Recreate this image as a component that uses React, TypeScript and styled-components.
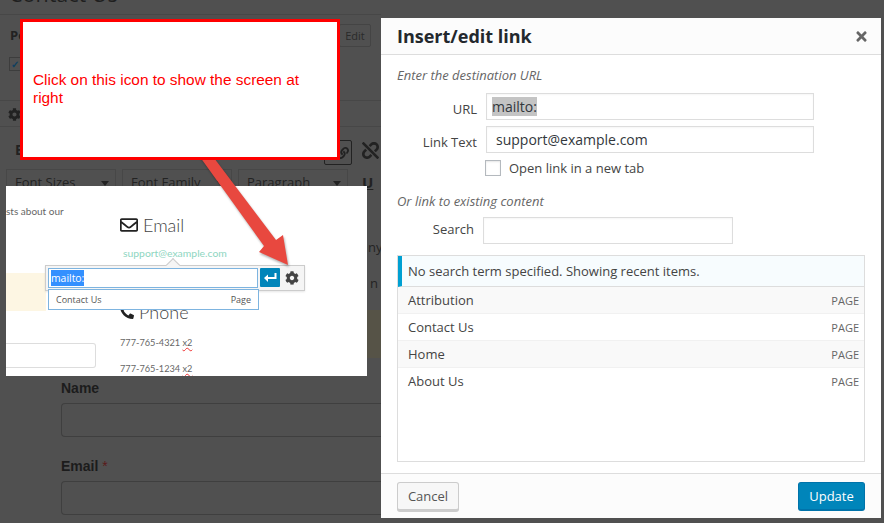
import styled, { createGlobalStyle } from "styled-components";
import { FaCog, FaLink, FaPhone, FaRegEnvelope, FaTimes, FaUnlink } from "react-icons/fa";

const GlobalStyle = createGlobalStyle`
  html, body {
    margin: 0;
    padding: 0;
    background: #505050;
  }
  * {
    box-sizing: border-box;
  }
`;

const Page = styled.div`
  position: relative;
  width: 884px;
  height: 523px;
  overflow: hidden;
  background: #505050;
  font-family: "Open Sans", "Liberation Sans", sans-serif;
  color: #222;
`;

/* dimmed wordpress editor behind the dialog */
const Backdrop = styled.div`
  display: flex;
  flex-direction: column;
  width: 381px;
`;

const TitleBar = styled.div`
  height: 15px;
  overflow: hidden;
  padding-left: 9px;
  border-bottom: 1px solid #474747;
  display: flex;
  align-items: flex-end;
`;

const PageTitle = styled.h1`
  margin: 0 0 5px;
  font-size: 21.5px;
  line-height: 30px;
  font-weight: 400;
  color: #1f1f1f;
  white-space: nowrap;
`;

const PublishRow = styled.div`
  height: 42px;
  padding: 9px 9px 0 10px;
  display: flex;
  justify-content: space-between;
  align-items: flex-start;
`;

const MetaLabel = styled.b`
  font-size: 13px;
  line-height: 22px;
`;

const GhostButton = styled.div`
  width: 32px;
  height: 23px;
  margin-right: 1px;
  border: 1px solid #444;
  border-radius: 2px;
  font-size: 11px;
  line-height: 21px;
  text-align: center;
  color: #2a2a2a;
`;

const CheckRow = styled.div`
  height: 43px;
  padding-left: 9px;
`;

const DimCheck = styled.div`
  width: 12px;
  height: 14px;
  border: 1px solid #3d3d3d;
  color: #0f3f5f;
  font-size: 10px;
  font-weight: 700;
  line-height: 12px;
  text-align: center;
`;

const MediaRow = styled.div`
  height: 27px;
  padding: 6px 0 0 8px;
  border-top: 1px solid #474747;
  border-bottom: 1px solid #474747;
  color: #222;
  font-size: 13px;
`;

const ToolRow = styled.div`
  height: 42px;
  padding: 13px 0 0 15px;
  display: flex;
  align-items: flex-start;
  font-size: 14px;
  font-weight: 700;
`;

const ToolSpacer = styled.div`
  flex: 1;
`;

const ToolBox = styled.div`
  width: 28px;
  height: 25px;
  border: 1px solid #222;
  border-radius: 2px;
  display: flex;
  align-items: center;
  justify-content: flex-end;
  padding-right: 2px;
  font-size: 12px;
`;

const ToolIcon = styled.div`
  width: 29px;
  padding: 1px 0 0 10px;
  font-size: 17px;
  color: #222;
`;

const SelectRow = styled.div`
  height: 30px;
  padding-left: 6px;
  display: flex;
  gap: 6px;
`;

const DimSelect = styled.div`
  width: 110px;
  height: 30px;
  padding: 3px 6px 0 8px;
  border: 1px solid #474747;
  display: flex;
  justify-content: space-between;
  font-size: 13px;
  color: #232323;
`;

const Caret = styled.span`
  margin-top: 8px;
  border-left: 4px solid transparent;
  border-right: 4px solid transparent;
  border-top: 5px solid #222;
  height: 0;
`;

const Underline = styled.span`
  margin: 3px 0 0 8px;
  font-size: 15px;
  font-weight: 700;
  text-decoration: underline;
`;

/* what shows of the page content between the inset and the dialog */
const ContentPeek = styled.div`
  height: 181px;
  padding-top: 39px;
  display: flex;
  flex-direction: column;
  align-items: flex-end;
  font-size: 13px;
  line-height: 18px;
  color: #232323;
`;

const PeekLine = styled.div<{ $gap: number; $width: number }>`
  margin-top: ${(p) => p.$gap}px;
  width: ${(p) => p.$width}px;
  white-space: nowrap;
`;

const PeekBand = styled.div`
  margin-top: 18px;
  width: 14px;
  height: 48px;
  background: #565347;
`;

const FormArea = styled.div`
  padding-left: 61px;
  display: flex;
  flex-direction: column;
  font-family: "Liberation Sans", sans-serif;
`;

const FieldLabel = styled.div<{ $gap: number }>`
  margin-top: ${(p) => p.$gap}px;
  font-size: 14px;
  line-height: 16px;
  font-weight: 700;
  color: #1c1c1c;
`;

const Required = styled.span`
  color: #5a1a1a;
  font-weight: 400;
`;

const DimInput = styled.div`
  height: 34px;
  margin-top: 7px;
  border: 1px solid #3f3f3f;
  border-right: 0;
  border-radius: 4px 0 0 4px;
`;

/* red annotation box */
const Callout = styled.div`
  position: absolute;
  left: 20px;
  top: 19px;
  width: 320px;
  height: 141px;
  z-index: 3;
  padding: 0 10px 2px;
  display: flex;
  align-items: center;
  background: #fff;
  border: 3px solid #f00;
  color: #f00;
  font: 15.4px/18px "Liberation Sans", sans-serif;
`;

const ArrowSvg = styled.svg`
  position: absolute;
  left: 190px;
  top: 150px;
  z-index: 2;
  filter: drop-shadow(1px 2px 1px rgba(0, 0, 0, 0.3));
`;

/* pasted screenshot of the page with the link popup */
const Inset = styled.div`
  position: absolute;
  left: 6px;
  top: 186px;
  width: 361px;
  height: 190px;
  z-index: 1;
  overflow: hidden;
  background: #fff;
  display: flex;
  font-family: Lato, "Open Sans", sans-serif;
  color: #555;
`;

const InsetLeft = styled.div`
  width: 114px;
  display: flex;
  flex-direction: column;
`;

const Blurb = styled.div`
  margin-top: 18px;
  font-size: 10px;
  line-height: 14px;
  white-space: nowrap;
  color: #666;
`;

const WarnStrip = styled.div`
  width: 40px;
  height: 38px;
  margin-top: 55px;
  background: #fdf6e3;
`;

const InsetInput = styled.div`
  width: 90px;
  height: 25px;
  margin-top: 32px;
  border: 1px solid #ddd;
  border-left: 0;
  border-radius: 0 3px 3px 0;
`;

const InsetRight = styled.div`
  display: flex;
  flex-direction: column;
`;

const ContactHead = styled.div<{ $gap: number }>`
  margin-top: ${(p) => p.$gap}px;
  height: 24px;
  display: flex;
  align-items: center;
  gap: 5px;
  font-size: 18px;
  font-weight: 300;
  color: #444;
  svg {
    color: #222;
  }
`;

const ContactMail = styled.div`
  margin: 9px 0 0 3px;
  font-size: 10.4px;
  line-height: 14px;
  color: #8ed6bf;
`;

const Phone = styled.div<{ $gap: number }>`
  margin-top: ${(p) => p.$gap}px;
  font-size: 9.2px;
  line-height: 14px;
  color: #666;
`;

const Squiggle = styled.span`
  text-decoration: underline wavy #e33;
  text-decoration-thickness: 1px;
`;

const LinkPopup = styled.div`
  position: absolute;
  left: 39px;
  top: 79px;
  width: 260px;
  height: 26px;
  padding: 2px;
  display: flex;
  gap: 2px;
  background: #f5f5f5;
  border: 1px solid #ccc;
  box-shadow: 0 1px 2px rgba(0, 0, 0, 0.1);
`;

const PopupNib = styled.div`
  position: absolute;
  left: 122px;
  top: -6px;
  width: 10px;
  height: 10px;
  background: #f5f5f5;
  border-top: 1px solid #ccc;
  border-left: 1px solid #ccc;
  transform: rotate(45deg);
`;

const PopupField = styled.div`
  position: relative;
  width: 211px;
  height: 20px;
  padding: 1px 2px;
  background: #fff;
  border: 1px solid #7db4e0;
  font: 10.4px/16px "Open Sans", sans-serif;
`;

const PopupSelected = styled.span`
  display: inline-block;
  background: #3390ff;
  color: #fff;
`;

const EnterButton = styled.div`
  width: 20px;
  height: 19px;
  display: flex;
  align-items: center;
  justify-content: center;
  background: #0085ba;
  border-radius: 1px;
`;

const GearSlot = styled.div`
  width: 20px;
  height: 20px;
  display: flex;
  align-items: center;
  justify-content: center;
  color: #444;
  font-size: 14px;
`;

const SuggestList = styled.div`
  position: absolute;
  left: 42px;
  top: 103px;
  width: 211px;
  height: 21px;
  padding: 0 7px;
  display: flex;
  align-items: center;
  justify-content: space-between;
  background: #fff;
  border: 1px solid #7db4e0;
  font: 9px/12px "Open Sans", sans-serif;
  color: #555;
`;

/* insert/edit link dialog */
const Modal = styled.div`
  position: absolute;
  left: 381px;
  top: 18px;
  width: 500px;
  height: 500px;
  z-index: 4;
  display: flex;
  flex-direction: column;
  background: #fff;
  font-size: 13px;
  color: #555;
`;

const ModalHeader = styled.header`
  height: 37px;
  padding: 0 12px 0 16px;
  display: flex;
  align-items: center;
  justify-content: space-between;
  background: #fcfcfc;
  border-bottom: 1px solid #ddd;
`;

const ModalTitle = styled.h2`
  margin: 0;
  font-size: 18px;
  line-height: 36px;
  font-weight: 700;
  color: #23282d;
`;

const CloseIcon = styled.span`
  display: flex;
  color: #666;
  font-size: 15px;
`;

const ModalBody = styled.div`
  flex: 1;
  padding: 11px 16px 0;
  display: flex;
  flex-direction: column;
`;

const Hint = styled.div<{ $gap?: number }>`
  margin-top: ${(p) => p.$gap ?? 0}px;
  font-style: italic;
  font-size: 13px;
  line-height: 18px;
  color: #666;
`;

const FieldRow = styled.div<{ $gap: number; $labelWidth: number }>`
  margin-top: ${(p) => p.$gap}px;
  display: grid;
  grid-template-columns: ${(p) => p.$labelWidth}px auto;
  align-items: center;
`;

const RowLabel = styled.label<{ $top: number; $bottom: number }>`
  padding: ${(p) => p.$top}px 9px ${(p) => p.$bottom}px 0;
  text-align: right;
  line-height: 18px;
  color: #444;
`;

const TextBox = styled.div<{ $width: number }>`
  width: ${(p) => p.$width}px;
  height: 27px;
  padding: 3px 3px 0;
  border: 1px solid #ddd;
  font-size: 14px;
  line-height: 19px;
  color: #32373c;
  box-shadow: inset 0 1px 2px rgba(0, 0, 0, 0.04);
`;

const Selected = styled.span`
  display: inline-block;
  margin-left: 2px;
  background: #c4c4c4;
`;

const BoxText = styled.span`
  padding-left: 6px;
`;

const NewTabRow = styled.div`
  margin: 7px 0 0 88px;
  height: 16px;
  display: flex;
  align-items: center;
  gap: 8px;
  line-height: 16px;
  color: #444;
`;

const Check = styled.span`
  width: 16px;
  height: 16px;
  background: #fff;
  border: 1px solid #b4b9be;
  box-shadow: inset 0 1px 2px rgba(0, 0, 0, 0.1);
`;

const Results = styled.div`
  margin-top: 11px;
  height: 207px;
  border: 1px solid #ddd;
  display: flex;
  flex-direction: column;
`;

const Notice = styled.div`
  height: 31px;
  padding-left: 6px;
  display: flex;
  align-items: center;
  background: #f7fcfe;
  border-left: 4px solid #00a0d2;
  border-bottom: 1px solid #ddd;
  color: #444;
`;

const ResultRow = styled.div<{ $odd: boolean }>`
  height: 27px;
  padding: 0 5px 0 10px;
  display: flex;
  align-items: center;
  justify-content: space-between;
  background: ${(p) => (p.$odd ? "#f9f9f9" : "#fff")};
  border-bottom: 1px solid #f1f1f1;
  color: #444;
  &:last-child {
    border-bottom-color: transparent;
  }
`;

const ResultType = styled.span`
  font-size: 11px;
  color: #666;
`;

const ModalFooter = styled.footer`
  height: 45px;
  padding: 8px 16px 0;
  display: flex;
  justify-content: space-between;
  align-items: flex-start;
  background: #fcfcfc;
  border-top: 1px solid #ddd;
`;

const Button = styled.button<{ $primary?: boolean }>`
  width: ${(p) => (p.$primary ? 67 : 62)}px;
  height: 29px;
  padding: 0;
  border-radius: 3px;
  border: 1px solid ${(p) => (p.$primary ? "#0073aa" : "#ccc")};
  border-bottom-width: 2px;
  background: ${(p) => (p.$primary ? "#0085ba" : "#f7f7f7")};
  color: ${(p) => (p.$primary ? "#fff" : "#555")};
  font: 13px/26px "Open Sans", sans-serif;
  box-shadow: ${(p) => (p.$primary ? "none" : "0 1px 0 #ccc")};
`;

const recentItems = ["Attribution", "Contact Us", "Home", "About Us"];

export default function App() {
  return (
    <Page>
      <GlobalStyle />
      <Backdrop>
        <TitleBar>
          <PageTitle>Contact Us</PageTitle>
        </TitleBar>
        <PublishRow>
          <MetaLabel>Pe</MetaLabel>
          <GhostButton>Edit</GhostButton>
        </PublishRow>
        <CheckRow>
          <DimCheck>✓</DimCheck>
        </CheckRow>
        <MediaRow>
          <FaCog />
        </MediaRow>
        <ToolRow>
          <span>B</span>
          <ToolSpacer />
          <ToolBox>
            <FaLink />
          </ToolBox>
          <ToolIcon>
            <FaUnlink />
          </ToolIcon>
        </ToolRow>
        <SelectRow>
          <DimSelect>
            Font Sizes <Caret />
          </DimSelect>
          <DimSelect>
            Font Family <Caret />
          </DimSelect>
          <DimSelect>
            Paragraph <Caret />
          </DimSelect>
          <Underline>U</Underline>
        </SelectRow>
        <ContentPeek>
          <PeekLine $gap={0} $width={13}>ny</PeekLine>
          <PeekLine $gap={18} $width={11}>n</PeekLine>
          <PeekBand />
        </ContentPeek>
        <FormArea>
          <FieldLabel $gap={0}>Name</FieldLabel>
          <DimInput />
          <FieldLabel $gap={21}>
            Email <Required>*</Required>
          </FieldLabel>
          <DimInput />
        </FormArea>
      </Backdrop>

      <Callout>
        <span>Click on this icon to show the screen at right</span>
      </Callout>

      <ArrowSvg width="110" height="125" viewBox="190 150 110 125">
        <polygon
          points="195,150 208,150 276,240 283,235 288,265 259,252 264,246"
          fill="#e8483f"
        />
      </ArrowSvg>

      <Inset>
        <InsetLeft>
          <Blurb>sts about our</Blurb>
          <WarnStrip />
          <InsetInput />
        </InsetLeft>
        <InsetRight>
          <ContactHead $gap={27}>
            <FaRegEnvelope size={18} />
            Email
          </ContactHead>
          <ContactMail>support@example.com</ContactMail>
          <ContactHead $gap={41}>
            <FaPhone size={14} style={{ transform: "scaleX(-1)" }} />
            Phone
          </ContactHead>
          <Phone $gap={12}>
            777-765-4321 <Squiggle>x2</Squiggle>
          </Phone>
          <Phone $gap={12}>
            777-765-1234 <Squiggle>x2</Squiggle>
          </Phone>
        </InsetRight>
        <LinkPopup>
          <PopupNib />
          <PopupField>
            <PopupSelected>mailto:</PopupSelected>
          </PopupField>
          <EnterButton>
            <svg width="13" height="11" viewBox="0 0 13 11" fill="#fff">
              <path d="M10.5 1H12.5V7H4V10L0 6L4 2.5V5H10.5Z" />
            </svg>
          </EnterButton>
          <GearSlot>
            <FaCog />
          </GearSlot>
        </LinkPopup>
        <SuggestList>
          <span>Contact Us</span>
          <span>Page</span>
        </SuggestList>
      </Inset>

      <Modal>
        <ModalHeader>
          <ModalTitle>Insert/edit link</ModalTitle>
          <CloseIcon>
            <FaTimes />
          </CloseIcon>
        </ModalHeader>
        <ModalBody>
          <Hint>Enter the destination URL</Hint>
          <FieldRow $gap={9} $labelWidth={89}>
            <RowLabel $top={4} $bottom={0}>URL</RowLabel>
            <TextBox $width={328}>
              <Selected>mailto:</Selected>
            </TextBox>
          </FieldRow>
          <FieldRow $gap={6} $labelWidth={89}>
            <RowLabel $top={4} $bottom={0}>Link Text</RowLabel>
            <TextBox $width={328}>
              <BoxText>support@example.com</BoxText>
            </TextBox>
          </FieldRow>
          <NewTabRow>
            <Check />
            Open link in a new tab
          </NewTabRow>
          <Hint $gap={16}>Or link to existing content</Hint>
          <FieldRow $gap={7} $labelWidth={86}>
            <RowLabel $top={0} $bottom={4}>Search</RowLabel>
            <TextBox $width={250} />
          </FieldRow>
          <Results>
            <Notice>No search term specified. Showing recent items.</Notice>
            {recentItems.map((item, i) => (
              <ResultRow key={item} $odd={i % 2 === 0}>
                {item}
                <ResultType>PAGE</ResultType>
              </ResultRow>
            ))}
          </Results>
        </ModalBody>
        <ModalFooter>
          <Button>Cancel</Button>
          <Button $primary>Update</Button>
        </ModalFooter>
      </Modal>
    </Page>
  );
}
